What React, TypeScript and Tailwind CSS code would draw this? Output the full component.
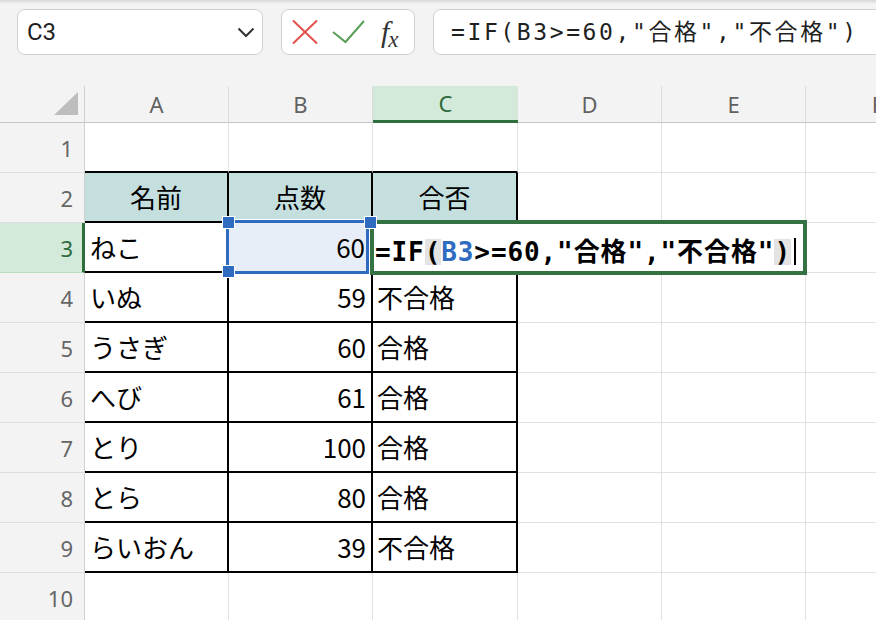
import React from 'react';

const cols = ['A', 'B', 'C', 'D', 'E', 'F'];
const data: Record<number, [string, string, string]> = {
  2: ['名前', '点数', '合否'],
  3: ['ねこ', '60', ''],
  4: ['いぬ', '59', '不合格'],
  5: ['うさぎ', '60', '合格'],
  6: ['へび', '61', '合格'],
  7: ['とり', '100', '合格'],
  8: ['とら', '80', '合格'],
  9: ['らいおん', '39', '不合格'],
};
const rows = [1, 2, 3, 4, 5, 6, 7, 8, 9, 10];

function dataCellClass(r: number, c: number): string {
  const inTable = r >= 2 && r <= 9 && c <= 2;
  if (inTable) {
    if (r === 2) return 'bg-[#c5dfdf] border-r-2 border-b-2 border-black justify-center';
    if (r === 3 && c === 1) return 'bg-[#e8eef7] border-r-2 border-b-2 border-black justify-end pr-[6px]';
    if (c === 0) return 'bg-white border-r-2 border-b-2 border-black justify-start pl-[5px]';
    if (c === 1) return 'bg-white border-r-2 border-b-2 border-black justify-end pr-[5px]';
    return 'bg-white border-r-2 border-b-2 border-black justify-start pl-[4px]';
  }
  if (r === 1 && c <= 2) return 'bg-white border-r border-r-[#e1e1e1] border-b-2 border-b-black';
  return 'bg-white border-r border-b border-[#e1e1e1]';
}

function FormulaText({ inCell }: { inCell?: boolean }) {
  return (
    <>
      <span>=IF</span>
      <span className={inCell ? 'bg-[#e3e3e3]' : ''}>(</span>
      <span className={inCell ? 'text-[#2f6bbf]' : ''}>B3</span>
      <span>&gt;=60,"合格","不合格"</span>
      <span className={inCell ? 'bg-[#e3e3e3]' : ''}>)</span>
    </>
  );
}

export default function App() {
  return (
    <div className="w-[876px] h-[620px] overflow-hidden bg-white relative font-['Noto_Sans','Noto_Sans_CJK_JP',sans-serif]">
      {/* Toolbar */}
      <div className="h-[86px] bg-[#f3f3f3] flex flex-col">
        <div className="h-[4px] bg-gradient-to-b from-[#d8d8d8] to-[#f3f3f3]" />
        <div className="flex items-start gap-[18px] pl-[17px] pt-[5px]">
          <div className="w-[246px] h-[46px] shrink-0 bg-white border border-[#d0d0d0] rounded-[8px] flex items-center justify-between pl-[9px] pr-[7px]">
            <span className="text-[24px] text-[#1f1f1f] font-['Roboto',sans-serif]">C3</span>
            <svg width="18" height="11" viewBox="0 0 18 11">
              <polyline points="1.5,1.5 9,9 16.5,1.5" fill="none" stroke="#333" strokeWidth="2" />
            </svg>
          </div>
          <div className="w-[134px] h-[46px] shrink-0 bg-white border border-[#d0d0d0] rounded-[8px] flex items-center pl-[10px]">
            <svg width="26" height="26" viewBox="0 0 26 26">
              <line x1="1" y1="1.5" x2="25" y2="24.5" stroke="#e0524b" strokeWidth="2" />
              <line x1="25" y1="1.5" x2="1" y2="24.5" stroke="#e0524b" strokeWidth="2" />
            </svg>
            <svg width="33" height="24" viewBox="0 0 33 24" className="ml-[14px]">
              <polyline points="1,12 13.5,22 32,1" fill="none" stroke="#5a9e5a" strokeWidth="2" />
            </svg>
            <span className="ml-[16px] flex items-end text-[#333] font-['Liberation_Serif',serif] italic leading-none">
              <span className="text-[30px]">f</span>
              <span className="text-[23px] translate-y-[4px] -ml-[1px]">x</span>
            </span>
          </div>
          <div className="w-[480px] h-[46px] shrink-0 bg-white border border-[#d0d0d0] rounded-[8px] flex items-center pl-[17px] text-[23px] tracking-[2.6px] text-[#1f1f1f] whitespace-nowrap font-['DejaVu_Sans_Mono','Noto_Sans_CJK_JP',monospace]">
            <FormulaText />
          </div>
        </div>
      </div>

      {/* Grid */}
      <div className="relative">
        <div className="grid w-[950px] grid-cols-[85px_144px_144px_145px_144px_144px_144px] grid-rows-[37px_repeat(10,50px)]">
          <div className="bg-[#f3f3f3] border-r border-r-[#d0d0d0] border-b border-b-[#c6c6c6] flex items-end justify-end pr-[6px] pb-[7px]">
            <svg width="24" height="23" viewBox="0 0 24 23">
              <polygon points="0,23 24,23 24,0" fill="#bdbdbd" />
            </svg>
          </div>
          {cols.map((c) =>
            c === 'C' ? (
              <div key={c} className="bg-[#d3eadb] border-b-[3px] border-b-[#2f6f3e] flex items-center justify-center text-[22px] text-[#2e6b3d] leading-none">
                {c}
              </div>
            ) : (
              <div key={c} className="bg-[#f3f3f3] border-r border-r-[#dcdcdc] border-b border-b-[#c6c6c6] flex items-center justify-center text-[22px] text-[#616161] leading-none">
                {c}
              </div>
            )
          )}
          {rows.map((r) => (
            <React.Fragment key={r}>
              {r === 3 ? (
                <div className="bg-[#d3eadb] border-r-[3px] border-r-[#2f6f3e] border-b border-b-[#b9dcc4] flex items-center justify-end pr-[9px] text-[22px] text-[#2e6b3d] leading-none">
                  {r}
                </div>
              ) : (
                <div className="bg-[#f3f3f3] border-r border-r-[#d0d0d0] border-b border-b-[#dedede] flex items-center justify-end pr-[11px] text-[22px] text-[#666] leading-none">
                  {r}
                </div>
              )}
              {cols.map((c, ci) => {
                const txt = data[r] ? (ci <= 2 ? data[r][ci] : '') : '';
                return (
                  <div key={c} className={`flex items-center text-[26px] leading-none text-black font-['Noto_Sans_CJK_JP',sans-serif] ${dataCellClass(r, ci)}`}>
                    {txt}
                  </div>
                );
              })}
            </React.Fragment>
          ))}
        </div>

        {/* Selection of B3 */}
        <div className="absolute left-[226px] top-[134px] w-[143px] h-[54px] border-[3px] border-[#2f6bbf] shadow-[0_0_0_1px_white]" />
        {/* Edit box for C3 */}
        <div className="absolute left-[370px] top-[134px] w-[437px] h-[55px] border-[4px] border-[#357243] bg-white flex items-center pt-[8px] pl-[1px] whitespace-nowrap text-[26px] tracking-[0.9px] font-bold text-black leading-none font-['DejaVu_Sans_Mono','Noto_Sans_CJK_JP',monospace]">
          <FormulaText inCell />
          <span className="w-[2px] h-[27px] bg-black ml-[3px]" />
        </div>
        {/* Handles */}
        <div className="absolute left-[222px] top-[130px] w-[13px] h-[13px] bg-[#2f6bbf] border border-white" />
        <div className="absolute left-[222px] top-[179px] w-[13px] h-[13px] bg-[#2f6bbf] border border-white" />
        <div className="absolute left-[364px] top-[130px] w-[13px] h-[13px] bg-[#2f6bbf] border border-white" />
      </div>
    </div>
  );
}
